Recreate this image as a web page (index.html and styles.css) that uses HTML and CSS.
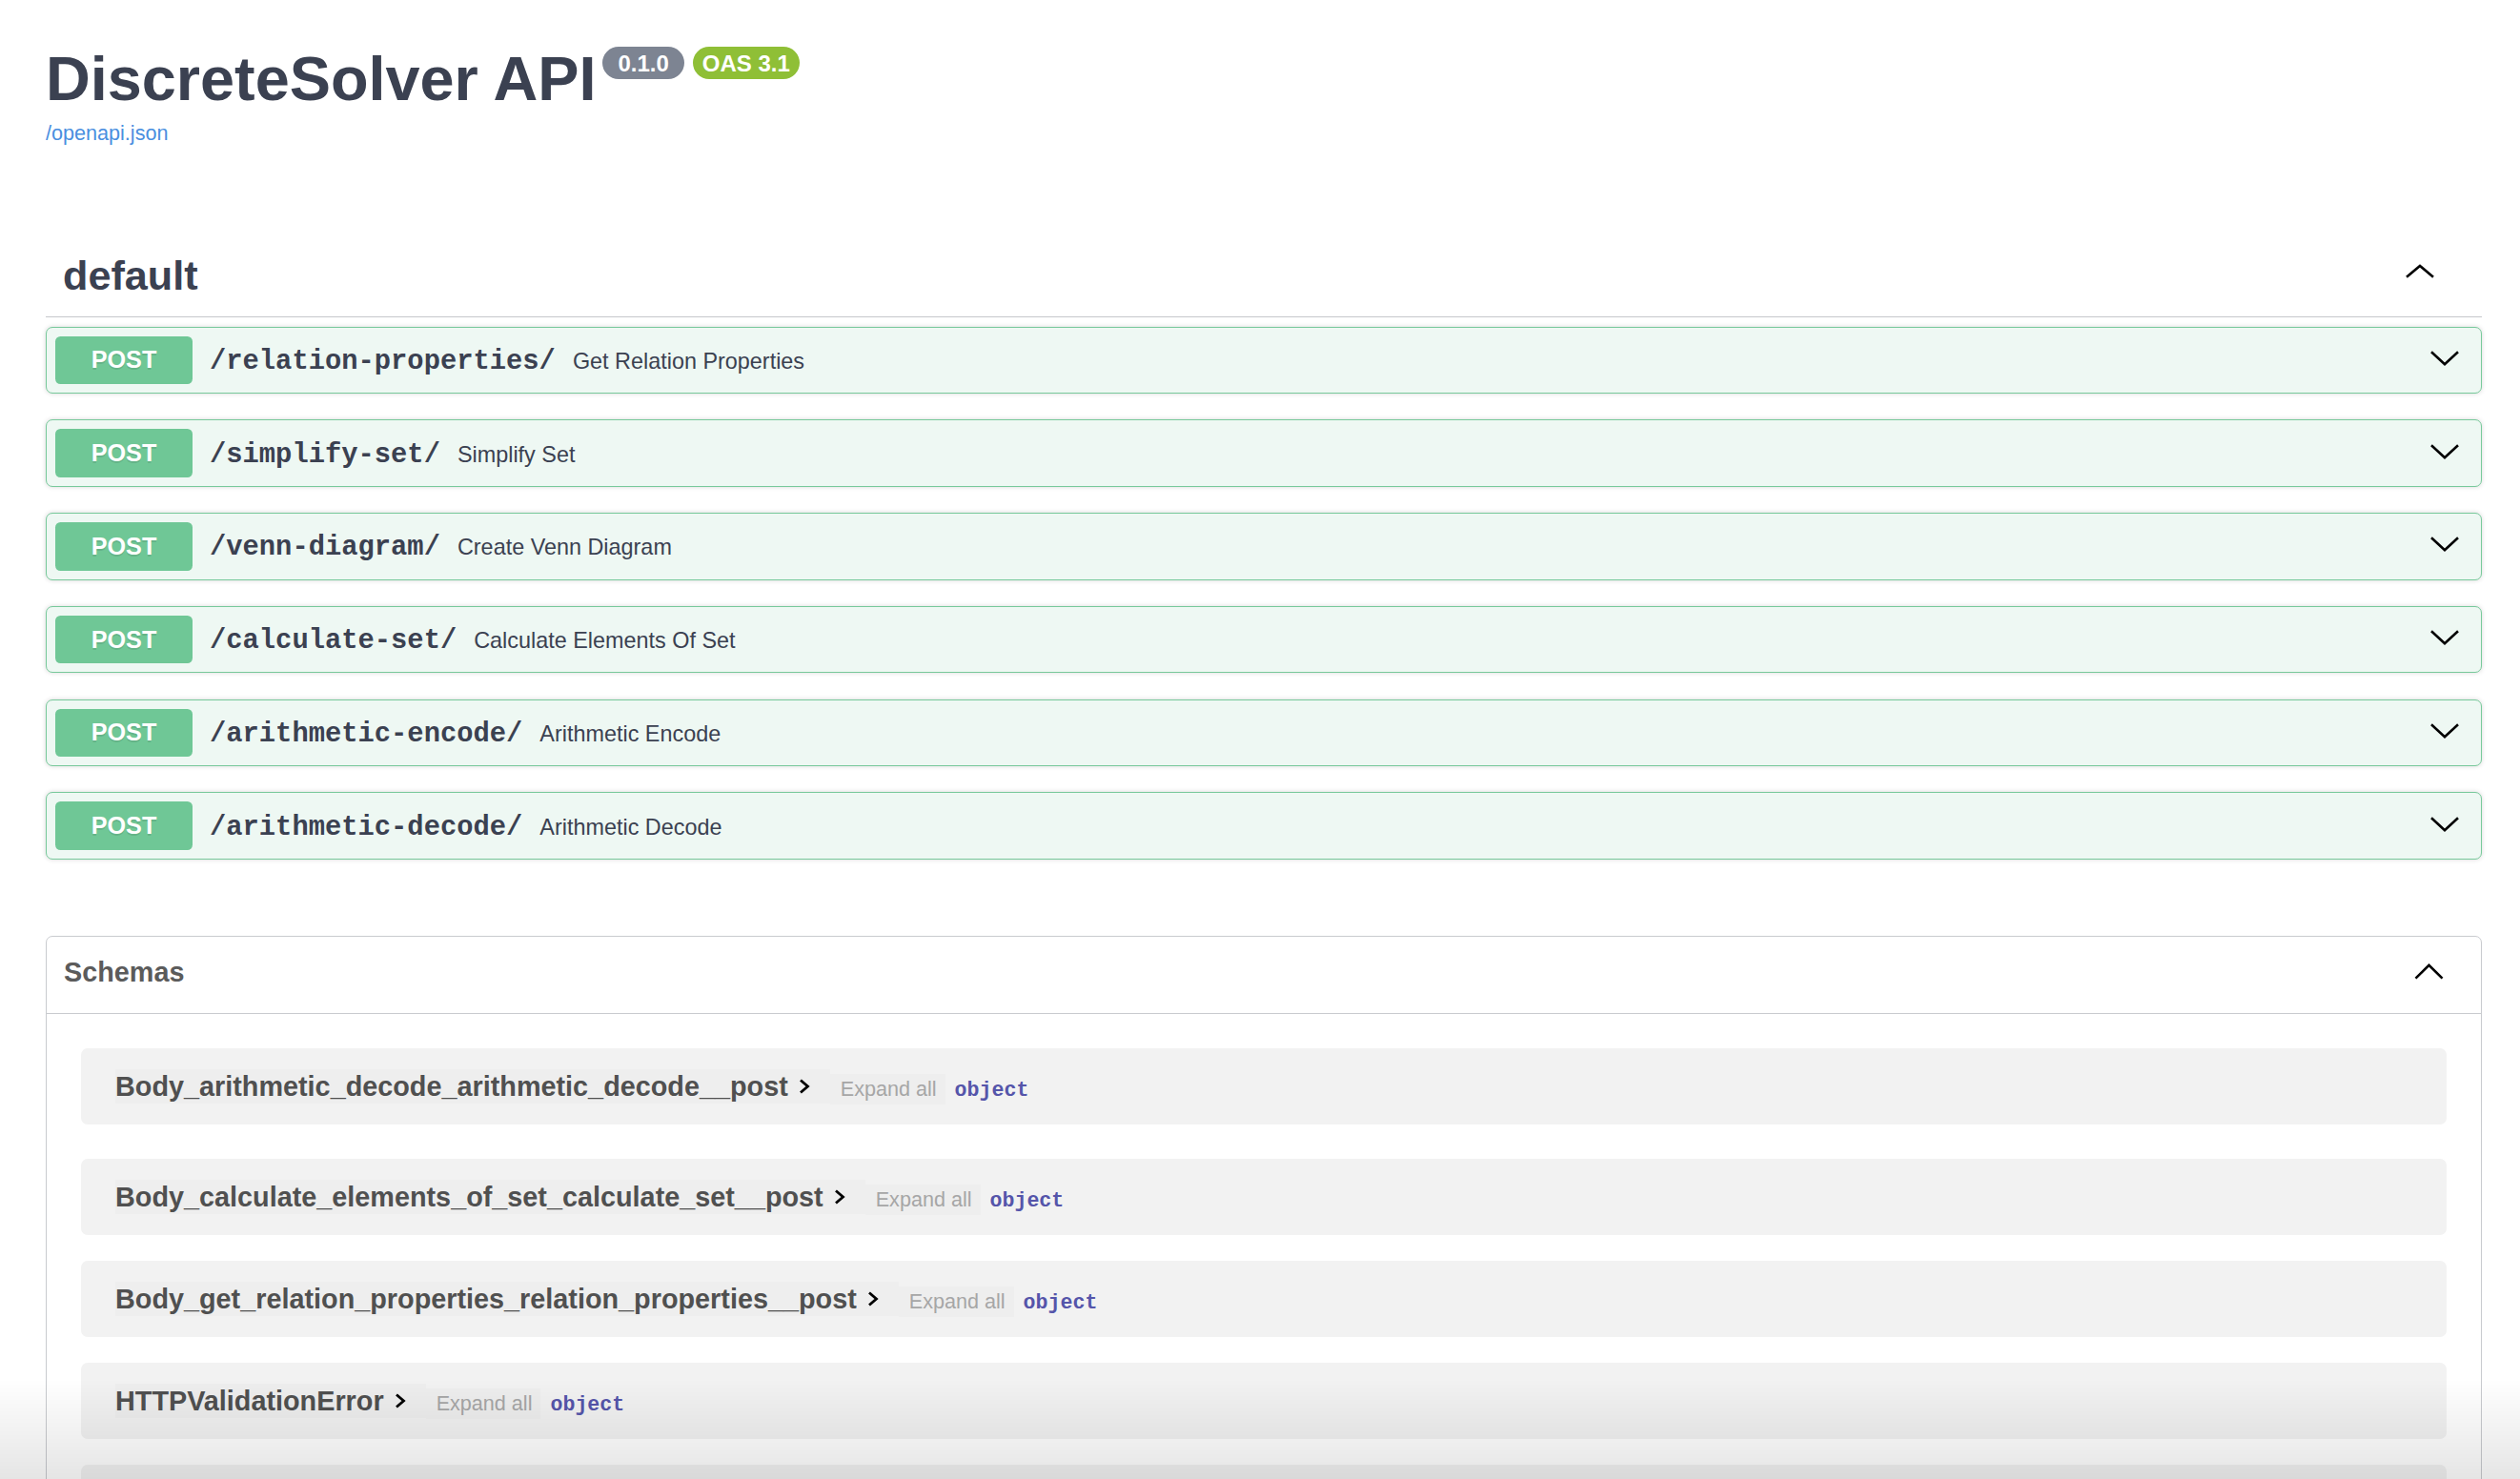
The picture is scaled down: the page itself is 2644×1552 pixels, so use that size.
FILE: index.html
```html
<!DOCTYPE html>
<html lang="en">
<head>
<meta charset="utf-8">
<title>DiscreteSolver API - Swagger UI</title>
<link rel="stylesheet" href="styles.css">
</head>
<body>
<div class="page">
  <div class="wrapper">
    <header class="info">
      <h2 class="title">DiscreteSolver API<span class="badge badge-version">0.1.0</span><span class="badge badge-oas">OAS 3.1</span></h2>
      <a class="url" href="#">/openapi.json</a>
    </header>

    <section class="tag-section">
      <div class="tag-header">
        <h3 class="tag-name">default</h3>
        <svg class="chev" width="36" height="36" viewBox="0 0 36 36"><polyline points="4,19.8 18,7.9 32,19.8" fill="none" stroke="#000" stroke-width="2.6"/></svg>
      </div>
      <div class="ops">
        <div class="opblock"><span class="method">POST</span><span class="path">/relation-properties/</span><span class="desc">Get Relation Properties</span><svg class="chev op-chev" width="36" height="36" viewBox="0 0 36 36"><polyline points="4,9.3 18,22.2 32,9.3" fill="none" stroke="#000" stroke-width="2.6"/></svg></div>
        <div class="opblock"><span class="method">POST</span><span class="path">/simplify-set/</span><span class="desc">Simplify Set</span><svg class="chev op-chev" width="36" height="36" viewBox="0 0 36 36"><polyline points="4,9.3 18,22.2 32,9.3" fill="none" stroke="#000" stroke-width="2.6"/></svg></div>
        <div class="opblock"><span class="method">POST</span><span class="path">/venn-diagram/</span><span class="desc">Create Venn Diagram</span><svg class="chev op-chev" width="36" height="36" viewBox="0 0 36 36"><polyline points="4,9.3 18,22.2 32,9.3" fill="none" stroke="#000" stroke-width="2.6"/></svg></div>
        <div class="opblock"><span class="method">POST</span><span class="path">/calculate-set/</span><span class="desc">Calculate Elements Of Set</span><svg class="chev op-chev" width="36" height="36" viewBox="0 0 36 36"><polyline points="4,9.3 18,22.2 32,9.3" fill="none" stroke="#000" stroke-width="2.6"/></svg></div>
        <div class="opblock"><span class="method">POST</span><span class="path">/arithmetic-encode/</span><span class="desc">Arithmetic Encode</span><svg class="chev op-chev" width="36" height="36" viewBox="0 0 36 36"><polyline points="4,9.3 18,22.2 32,9.3" fill="none" stroke="#000" stroke-width="2.6"/></svg></div>
        <div class="opblock"><span class="method">POST</span><span class="path">/arithmetic-decode/</span><span class="desc">Arithmetic Decode</span><svg class="chev op-chev" width="36" height="36" viewBox="0 0 36 36"><polyline points="4,9.3 18,22.2 32,9.3" fill="none" stroke="#000" stroke-width="2.6"/></svg></div>
      </div>
    </section>

    <section class="models">
      <div class="models-header">
        <h4 class="models-title">Schemas</h4>
        <svg class="chev" width="36" height="36" viewBox="0 0 36 36"><polyline points="3.5,21.7 17.5,7.8 31.5,21.7" fill="none" stroke="#000" stroke-width="2.6"/></svg>
      </div>
      <div class="models-body">
        <div class="model"><div class="model-line"><span class="model-btn"><span class="model-title">Body_arithmetic_decode_arithmetic_decode__post</span><svg class="toggle" width="16" height="18" viewBox="0 0 16 18"><polyline points="3,2.5 10.5,9 3,15.5" fill="none" stroke="#000" stroke-width="2.8"/></svg></span><span class="expand">Expand all</span><span class="type">object</span></div></div>
        <div class="model"><div class="model-line"><span class="model-btn"><span class="model-title">Body_calculate_elements_of_set_calculate_set__post</span><svg class="toggle" width="16" height="18" viewBox="0 0 16 18"><polyline points="3,2.5 10.5,9 3,15.5" fill="none" stroke="#000" stroke-width="2.8"/></svg></span><span class="expand">Expand all</span><span class="type">object</span></div></div>
        <div class="model"><div class="model-line"><span class="model-btn"><span class="model-title">Body_get_relation_properties_relation_properties__post</span><svg class="toggle" width="16" height="18" viewBox="0 0 16 18"><polyline points="3,2.5 10.5,9 3,15.5" fill="none" stroke="#000" stroke-width="2.8"/></svg></span><span class="expand">Expand all</span><span class="type">object</span></div></div>
        <div class="model"><div class="model-line"><span class="model-btn"><span class="model-title">HTTPValidationError</span><svg class="toggle" width="16" height="18" viewBox="0 0 16 18"><polyline points="3,2.5 10.5,9 3,15.5" fill="none" stroke="#000" stroke-width="2.8"/></svg></span><span class="expand">Expand all</span><span class="type">object</span></div></div>
        <div class="model model-partial"></div>
      </div>
    </section>
  </div>
  <div class="fade"></div>
</div>
</body>
</html>
```

FILE: styles.css
```css
html, body {
  margin: 0;
  padding: 0;
  background: #ffffff;
}

body {
  font-family: "Liberation Sans", Arial, Helvetica, sans-serif;
  color: #3b4151;
}

.page {
  height: 100vh;
  overflow: hidden;
}

.wrapper {
  padding: 0 40px 0 48px;
}

/* ---------- info ---------- */
.info {
  padding-top: 46px;
}

.title {
  display: flex;
  align-items: flex-start;
  margin: 0;
  font-size: 64.8px;
  line-height: 74.5px;
  font-weight: 700;
  color: #3b4151;
}

.badge {
  display: inline-block;
  margin-top: 3px;
  height: 34px;
  line-height: 35px;
  border-radius: 17px;
  font-size: 24px;
  font-weight: 700;
  color: #ffffff;
}

.badge-version {
  background: #7d8492;
  padding: 0 16px;
  margin-left: 7px;
}

.badge-oas {
  background: #8fbf36;
  padding: 0 10px;
  margin-left: 9px;
}

.url {
  display: block;
  width: max-content;
  margin-top: 6px;
  font-size: 21.6px;
  line-height: 25px;
  color: #4a8fe0;
  text-decoration: none;
}

/* ---------- tag section ---------- */
.tag-section {
  margin-top: 95px;
}

.tag-header {
  display: flex;
  align-items: center;
  padding: 18px 47.5px 18px 18px;
  border-bottom: 1px solid #c6c8cc;
  margin-bottom: 10px;
}

.tag-name {
  flex: 1;
  margin: 0;
  font-size: 43.2px;
  font-weight: 700;
  color: #3b4151;
}

.chev {
  display: block;
  flex: none;
}

.ops {
  display: flex;
  flex-direction: column;
  gap: 27.2px;
}

.opblock {
  display: flex;
  align-items: center;
  padding: 9px;
  border: 1px solid #78c99b;
  border-radius: 7px;
  background: #eef8f3;
  box-shadow: 0 0 5px rgba(0, 0, 0, 0.16);
}

.method {
  min-width: 144px;
  padding: 10.8px 0;
  font-size: 25.2px;
  line-height: 29px;
  font-weight: 700;
  text-align: center;
  color: #ffffff;
  background: #6fc796;
  border-radius: 5.4px;
  text-shadow: 0 1.8px 0 rgba(0, 0, 0, 0.1);
}

.path {
  padding: 3px 18px 0;
  font-family: "Liberation Mono", "Courier New", monospace;
  font-weight: 700;
  font-size: 28.8px;
  color: #3b4151;
}

.desc {
  flex: 1;
  padding-top: 3px;
  font-size: 23.4px;
  color: #3b4151;
}

.op-chev {
  margin-right: 11px;
}

/* ---------- models ---------- */
.models {
  margin-top: 80px;
  border: 1px solid #c9cbcf;
  border-radius: 7px;
}

.models-header {
  display: flex;
  align-items: center;
  min-height: 44px;
  padding: 18px 36px 18px 18px;
  border-bottom: 1px solid #c9cbcf;
}

.models-title {
  flex: 1;
  margin: 0 0 6px;
  font-size: 28.8px;
  font-weight: 700;
  color: #5b5b5b;
}

.models-body {
  display: flex;
  flex-direction: column;
  padding: 36px;
}

.model {
  box-sizing: border-box;
  height: 80px;
  padding: 22px 36px;
  margin-bottom: 27px;
  background: #f2f2f2;
  border-radius: 7px;
}

.model:first-child {
  margin-bottom: 36px;
}

.model-line {
  display: flex;
  align-items: baseline;
}

.model-btn {
  display: inline-flex;
  align-items: center;
  height: 36px;
  padding-right: 17.5px;
  background: rgba(0, 0, 0, 0.014);
}

.model-title {
  font-size: 28.8px;
  line-height: 36px;
  font-weight: 700;
  color: #505050;
}

.toggle {
  display: block;
  margin-left: 10.5px;
}

.expand {
  padding: 3px 9px 3px 11px;
  font-size: 21.6px;
  color: #a6a6a6;
  background: rgba(0, 0, 0, 0.014);
}

.type {
  margin-left: 10px;
  font-family: "Liberation Mono", "Courier New", monospace;
  font-weight: 700;
  font-size: 21.6px;
  color: #5555aa;
}

/* bottom fade overlay */
.fade {
  position: fixed;
  left: 0;
  right: 0;
  bottom: 0;
  height: 105px;
  background: linear-gradient(to bottom, rgba(0, 0, 0, 0), rgba(0, 0, 0, 0.1));
  pointer-events: none;
}
```
